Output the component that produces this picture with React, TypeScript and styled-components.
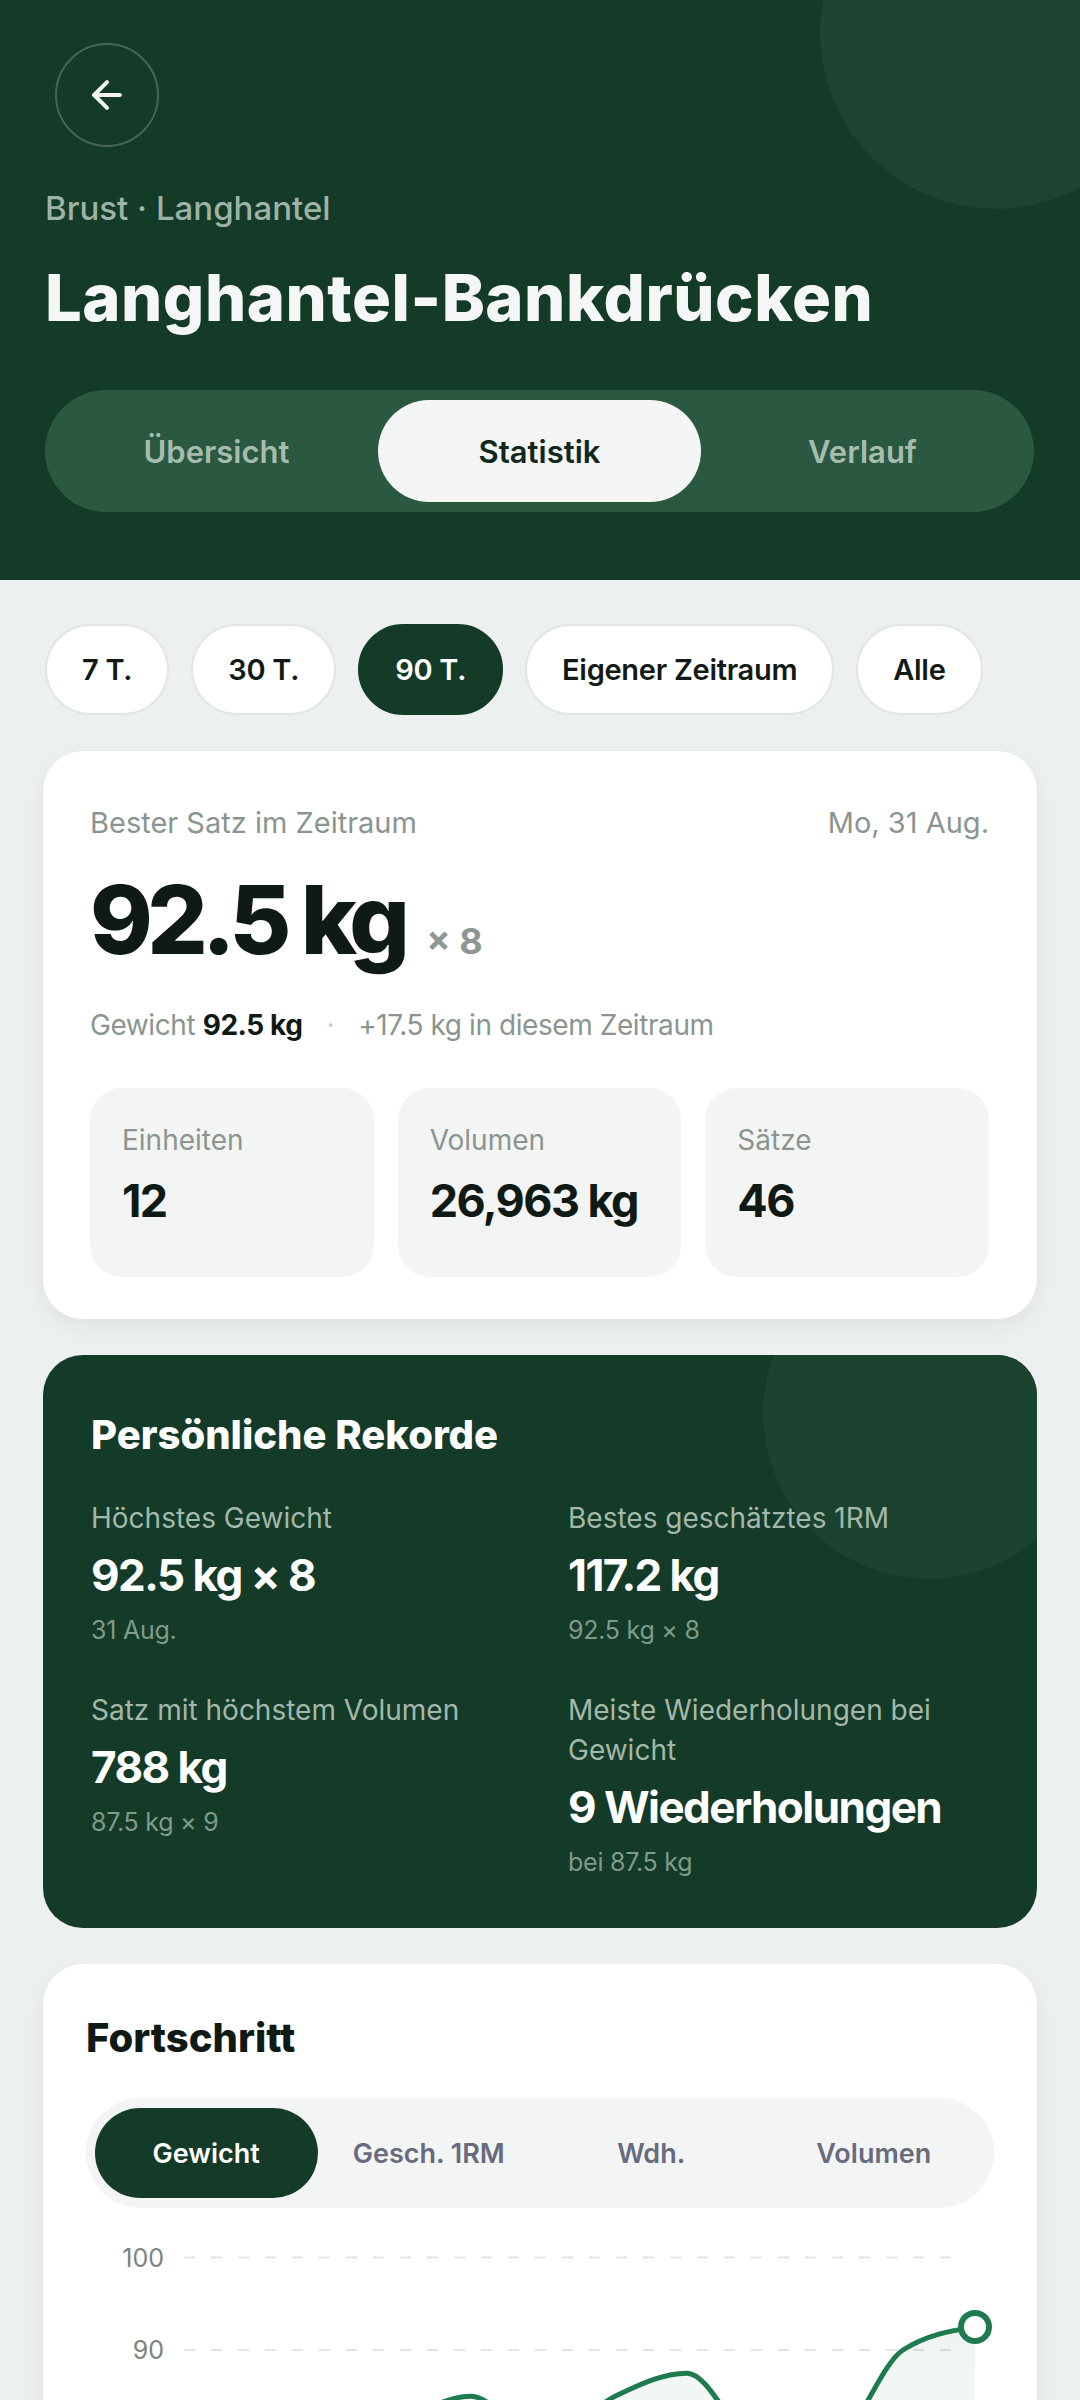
import React from 'react';
import styled, { createGlobalStyle } from 'styled-components';
import { ArrowLeft } from 'lucide-react';

const GlobalStyle = createGlobalStyle`
  * { box-sizing: border-box; }
  body {
    margin: 0;
    background: #ecf0ee;
    font-family: Inter, "Noto Sans", sans-serif;
    color: #0f1a14;
  }
  button { font-family: inherit; cursor: pointer; }
`;

const Page = styled.div`
  width: 1080px;
  min-height: 2400px;
  background: #ecf0ee;
`;

/* header */

const Header = styled.header`
  position: relative;
  overflow: hidden;
  background: #143a28;
  padding: 43px 46px 68px 45px;
`;

const HeaderBlob = styled.div`
  position: absolute;
  top: -143px;
  right: -92px;
  width: 352px;
  height: 352px;
  border-radius: 50%;
  background: #1c4431;
`;

const BackButton = styled.button`
  position: relative;
  width: 104px;
  height: 104px;
  margin-left: 10px;
  padding: 0;
  border-radius: 50%;
  border: 2px solid rgba(255, 255, 255, 0.22);
  background: transparent;
  color: #f1f5f2;
  display: flex;
  align-items: center;
  justify-content: center;
`;

const Kicker = styled.div`
  position: relative;
  margin-top: 41px;
  font-size: 33px;
  line-height: 40px;
  font-weight: 500;
  color: #9db3a5;
`;

const Title = styled.h1`
  position: relative;
  margin: 34px 0 0;
  font-size: 65px;
  line-height: 72px;
  font-weight: 800;
  letter-spacing: 0.008em;
  color: #f4f7f5;
`;

const Segmented = styled.div`
  position: relative;
  margin-top: 56px;
  display: grid;
  grid-template-columns: repeat(3, 1fr);
  height: 122px;
  padding: 10px;
  border-radius: 61px;
  background: #2a5841;
`;

const SegTab = styled.button<{ $active?: boolean }>`
  border: 0;
  border-radius: 51px;
  font-size: 31px;
  font-weight: 600;
  background: ${(p) => (p.$active ? '#f3f6f4' : 'transparent')};
  color: ${(p) => (p.$active ? '#13281d' : '#a6bdae')};
`;

/* body */

const Main = styled.main`
  display: flex;
  flex-direction: column;
  gap: 36px;
  padding: 44px 43px 80px;
`;

const ChipRow = styled.div`
  display: flex;
  gap: 22px;
  padding-left: 2px;
`;

const Chip = styled.button<{ $active?: boolean }>`
  height: 91px;
  padding: 0 35px;
  border-radius: 46px;
  border: 2px solid ${(p) => (p.$active ? '#143a28' : '#e2e7e4')};
  background: ${(p) => (p.$active ? '#143a28' : '#ffffff')};
  color: ${(p) => (p.$active ? '#ffffff' : '#111a15')};
  font-size: 29px;
  font-weight: 600;
  letter-spacing: -0.01em;
  white-space: nowrap;
`;

const Card = styled.section`
  background: #ffffff;
  border-radius: 40px;
  padding: 54px 48px 42px 47px;
  box-shadow: 0 8px 22px rgba(18, 44, 30, 0.06);
`;

const TopRow = styled.div`
  display: flex;
  justify-content: space-between;
  font-size: 29px;
  line-height: 36px;
  color: #8a958f;
`;

const BigRow = styled.div`
  margin-top: 30px;
  display: flex;
  align-items: baseline;
`;

const BigValue = styled.div`
  font-size: 95px;
  line-height: 98px;
  font-weight: 800;
  letter-spacing: -0.06em;
  color: #0f1a14;
`;

const Reps = styled.span`
  margin-left: 22px;
  font-size: 36px;
  font-weight: 700;
  color: #8d9892;
`;

const Meta = styled.div`
  margin-top: 38px;
  font-size: 28px;
  line-height: 36px;
  letter-spacing: -0.015em;
  color: #8a958f;

  strong {
    font-weight: 700;
    color: #0f1a14;
  }
`;

const Dot = styled.span`
  margin: 0 24px;
  color: #c8cfcb;
`;

const StatsGrid = styled.div`
  margin-top: 45px;
  display: grid;
  grid-template-columns: repeat(3, 1fr);
  gap: 24px;
`;

const StatBox = styled.div`
  height: 189px;
  padding: 35px 32px 0;
  border-radius: 32px;
  background: #f3f5f4;
`;

const StatLabel = styled.div`
  font-size: 28px;
  line-height: 34px;
  color: #8a958f;
`;

const StatValue = styled.div`
  margin-top: 17px;
  font-size: 45px;
  line-height: 54px;
  font-weight: 700;
  letter-spacing: -0.035em;
  color: #0f1a14;
`;

/* records */

const RecordsCard = styled.section`
  position: relative;
  overflow: hidden;
  border-radius: 40px;
  padding: 56px 48px 50px;
  background: #143a28;
`;

const RecordsBlob = styled.div`
  position: absolute;
  top: -108px;
  right: -58px;
  width: 332px;
  height: 332px;
  border-radius: 50%;
  background: #1c4230;
`;

const CardTitle = styled.h2<{ $light?: boolean }>`
  position: relative;
  margin: 0;
  font-size: 40px;
  line-height: 48px;
  font-weight: 800;
  letter-spacing: 0;
  color: ${(p) => (p.$light ? '#ffffff' : '#0f1a14')};
`;

const RecordGrid = styled.div`
  position: relative;
  margin-top: 39px;
  display: grid;
  grid-template-columns: 1fr 1fr;
  column-gap: 56px;
  row-gap: 44px;
`;

const RecordLabel = styled.div`
  font-size: 28px;
  line-height: 40px;
  color: #a3b8aa;
`;

const RecordValue = styled.div`
  margin-top: 11px;
  font-size: 44px;
  line-height: 52px;
  font-weight: 700;
  letter-spacing: -0.035em;
  color: #ffffff;
`;

const RecordSub = styled.div`
  margin-top: 13px;
  font-size: 25px;
  line-height: 32px;
  letter-spacing: -0.01em;
  color: #7f9b89;
`;

/* progress */

const ProgressCard = styled.section`
  background: #ffffff;
  border-radius: 40px;
  padding: 50px 43px 40px;
  box-shadow: 0 8px 22px rgba(18, 44, 30, 0.06);
`;

const MetricTabs = styled.div`
  margin-top: 36px;
  display: grid;
  grid-template-columns: repeat(4, 1fr);
  height: 110px;
  padding: 10px 9px;
  border-radius: 55px;
  background: #f3f5f4;
`;

const MetricTab = styled.button<{ $active?: boolean }>`
  border: 0;
  border-radius: 45px;
  font-size: 27px;
  font-weight: 600;
  background: ${(p) => (p.$active ? '#143a28' : 'transparent')};
  color: ${(p) => (p.$active ? '#ffffff' : '#676b7d')};
`;

const ChartSvg = styled.svg`
  display: block;
  margin-top: 20px;
`;

const chartValues = [75, 77.5, 80, 82.5, 85, 80, 85, 87.5, 80, 80, 90, 92.5];
const yOf = (w: number) => 29.5 + (100 - w) * 9.25;
const points: [number, number][] = chartValues.map((w, i) => [97 + 72 * i, yOf(w)]);

// monotone-x interpolation, same idea as d3's curveMonotoneX
function monotonePath(pts: [number, number][]) {
  const n = pts.length;
  const s: number[] = [];
  for (let i = 0; i < n - 1; i++) {
    s.push((pts[i + 1][1] - pts[i][1]) / (pts[i + 1][0] - pts[i][0]));
  }
  const t: number[] = new Array(n).fill(0);
  for (let i = 1; i < n - 1; i++) {
    const p = (s[i - 1] + s[i]) / 2;
    t[i] =
      (Math.sign(s[i - 1]) + Math.sign(s[i])) *
        Math.min(Math.abs(s[i - 1]), Math.abs(s[i]), 0.5 * Math.abs(p)) || 0;
  }
  t[0] = (3 * s[0] - t[1]) / 2;
  t[n - 1] = (3 * s[n - 2] - t[n - 2]) / 2;
  let d = `M${pts[0][0]},${pts[0][1]}`;
  for (let i = 0; i < n - 1; i++) {
    const [x0, y0] = pts[i];
    const [x1, y1] = pts[i + 1];
    const dx = (x1 - x0) / 3;
    d += ` C${x0 + dx},${y0 + dx * t[i]} ${x1 - dx},${y1 - dx * t[i + 1]} ${x1},${y1}`;
  }
  return d;
}

const linePath = monotonePath(points);
const bottomY = yOf(70);
const areaPath = `${linePath} L${points[points.length - 1][0]},${bottomY} L${points[0][0]},${bottomY} Z`;
const last = points[points.length - 1];

const Chart = () => (
  <ChartSvg width={908} height={380} viewBox="0 0 908 380">
    <defs>
      <linearGradient id="areaFill" x1="0" y1="0" x2="0" y2="1">
        <stop offset="0%" stopColor="#1e7a4f" stopOpacity={0.08} />
        <stop offset="100%" stopColor="#1e7a4f" stopOpacity={0.02} />
      </linearGradient>
    </defs>
    {[100, 90, 80, 70].map((v) => (
      <g key={v}>
        <line
          x1={98}
          x2={880}
          y1={yOf(v)}
          y2={yOf(v)}
          stroke="#e1e5e3"
          strokeWidth={2}
          strokeDasharray="11 16"
        />
        <text
          x={78}
          y={yOf(v)}
          textAnchor="end"
          dominantBaseline="central"
          fontFamily="Inter, sans-serif"
          fontSize={25}
          fill="#7b8480"
        >
          {v}
        </text>
      </g>
    ))}
    <path d={areaPath} fill="url(#areaFill)" />
    <path d={linePath} fill="none" stroke="#1e7a4f" strokeWidth={5} strokeLinecap="round" />
    <circle cx={last[0]} cy={last[1]} r={14} fill="#ffffff" stroke="#1e7a4f" strokeWidth={6} />
    {[
      ['3 Jun', 97],
      ['15 Jul', 457],
      ['31 Aug', 889],
    ].map(([label, x]) => (
      <text
        key={label as string}
        x={x as number}
        y={350}
        textAnchor="middle"
        fontFamily="Inter, sans-serif"
        fontSize={23}
        fill="#7b8480"
      >
        {label}
      </text>
    ))}
  </ChartSvg>
);

const ranges = ['7 T.', '30 T.', '90 T.', 'Eigener Zeitraum', 'Alle'];
const metrics = ['Gewicht', 'Gesch. 1RM', 'Wdh.', 'Volumen'];

export default function App() {
  return (
    <Page>
      <GlobalStyle />
      <Header>
        <HeaderBlob />
        <BackButton aria-label="Zurück">
          <ArrowLeft size={44} strokeWidth={2.2} />
        </BackButton>
        <Kicker>Brust · Langhantel</Kicker>
        <Title>Langhantel-Bankdrücken</Title>
        <Segmented>
          <SegTab>Übersicht</SegTab>
          <SegTab $active>Statistik</SegTab>
          <SegTab>Verlauf</SegTab>
        </Segmented>
      </Header>

      <Main>
        <ChipRow>
          {ranges.map((r) => (
            <Chip key={r} $active={r === '90 T.'}>
              {r}
            </Chip>
          ))}
        </ChipRow>

        <Card>
          <TopRow>
            <span>Bester Satz im Zeitraum</span>
            <span>Mo, 31 Aug.</span>
          </TopRow>
          <BigRow>
            <BigValue>92.5 kg</BigValue>
            <Reps>× 8</Reps>
          </BigRow>
          <Meta>
            Gewicht <strong>92.5 kg</strong>
            <Dot>·</Dot>
            +17.5 kg in diesem Zeitraum
          </Meta>
          <StatsGrid>
            <StatBox>
              <StatLabel>Einheiten</StatLabel>
              <StatValue>12</StatValue>
            </StatBox>
            <StatBox>
              <StatLabel>Volumen</StatLabel>
              <StatValue>26,963 kg</StatValue>
            </StatBox>
            <StatBox>
              <StatLabel>Sätze</StatLabel>
              <StatValue>46</StatValue>
            </StatBox>
          </StatsGrid>
        </Card>

        <RecordsCard>
          <RecordsBlob />
          <CardTitle $light>Persönliche Rekorde</CardTitle>
          <RecordGrid>
            <div>
              <RecordLabel>Höchstes Gewicht</RecordLabel>
              <RecordValue>92.5 kg × 8</RecordValue>
              <RecordSub>31 Aug.</RecordSub>
            </div>
            <div>
              <RecordLabel>Bestes geschätztes 1RM</RecordLabel>
              <RecordValue>117.2 kg</RecordValue>
              <RecordSub>92.5 kg × 8</RecordSub>
            </div>
            <div>
              <RecordLabel>Satz mit höchstem Volumen</RecordLabel>
              <RecordValue>788 kg</RecordValue>
              <RecordSub>87.5 kg × 9</RecordSub>
            </div>
            <div>
              <RecordLabel>Meiste Wiederholungen bei Gewicht</RecordLabel>
              <RecordValue>9 Wiederholungen</RecordValue>
              <RecordSub>bei 87.5 kg</RecordSub>
            </div>
          </RecordGrid>
        </RecordsCard>

        <ProgressCard>
          <CardTitle>Fortschritt</CardTitle>
          <MetricTabs>
            {metrics.map((m) => (
              <MetricTab key={m} $active={m === 'Gewicht'}>
                {m}
              </MetricTab>
            ))}
          </MetricTabs>
          <Chart />
        </ProgressCard>
      </Main>
    </Page>
  );
}
